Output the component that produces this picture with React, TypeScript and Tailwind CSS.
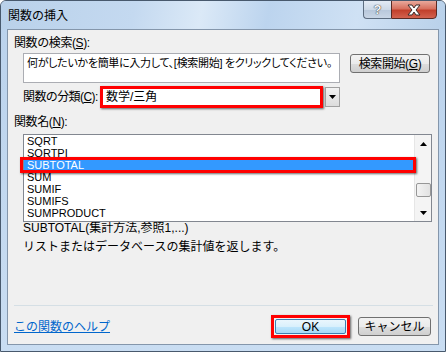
const items = ['SQRT', 'SQRTPI', 'SUBTOTAL', 'SUM', 'SUMIF', 'SUMIFS', 'SUMPRODUCT'];

function Triangle({ up = false }: { up?: boolean }) {
  return (
    <svg width="7" height="4" viewBox="0 0 7 4">
      <path d={up ? 'M0 4 L3.5 0 L7 4 Z' : 'M0 0 L7 0 L3.5 4 Z'} fill="#000" />
    </svg>
  );
}

export default function App() {
  return (
    <div className="w-[446px] h-[352px] bg-white font-['Liberation_Sans','Noto_Sans_CJK_JP',sans-serif] text-[12px] text-black">
      <div className="w-full h-full flex flex-col rounded-t-[6px] border border-[#48596d] bg-[linear-gradient(to_bottom,#bad2ec,#c9ddf2)] overflow-hidden">
        {/* title bar */}
        <div className="h-[28px] flex items-start bg-[linear-gradient(100deg,#b9d1ea_0%,#c4d9f0_30%,#dbe9f7_45%,#bcd4ee_60%,#cfe1f4_80%,#b9d1ea_100%)]">
          <span className="ml-[7px] mt-[8px] leading-[14px]">関数の挿入</span>
          <div className="ml-auto mr-[8px] flex -mt-px">
            <div className="w-[28px] h-[19px] rounded-bl-[4px] border border-[#5d6d80] border-r-0 bg-[linear-gradient(to_bottom,#e3ebf5,#cdd9e7_50%,#b7c7da_51%,#c9d6e6)] flex items-center justify-center">
              <span className="text-[13px] leading-[13px] font-bold text-[#f4f6f8] [text-shadow:0_0_1px_#333,0_0_1px_#333]">?</span>
            </div>
            <div className="w-[46px] h-[19px] rounded-br-[4px] border border-[#5a2a24] bg-[linear-gradient(to_bottom,#e9a99c,#d7715f_45%,#c2402c_55%,#d3624f)] flex items-center justify-center">
              <svg width="16" height="12" viewBox="0 0 16 12">
                <path d="M2 1 L6 1 L8 4 L10 1 L14 1 L10 6 L14 11 L10 11 L8 8 L6 11 L2 11 L6 6 Z" fill="#fff" stroke="#3a2a2a" strokeWidth="1" strokeLinejoin="round" />
              </svg>
            </div>
          </div>
        </div>

        {/* client area */}
        <div className="mx-[6px] mb-[6px] flex-1 border border-[#8496ab] bg-[#f0f0f0] flex flex-col">
          <div className="pt-[6px] pl-[6px] leading-[14px] tracking-[-0.4px]">
            関数の検索(<span className="underline">S</span>):
          </div>

          <div className="flex items-start pl-[15px] mt-[3px]">
            <div className="w-[317px] h-[30px] border border-[#abadb3] bg-white pl-[3px] pt-[2px] leading-[14px] whitespace-nowrap overflow-hidden text-[11px] [font-feature-settings:'palt'] tracking-[-0.3px]">
              何がしたいかを簡単に入力して、[検索開始] をクリックしてください。
            </div>
            <button className="ml-[10px] mt-px w-[80px] h-[19px] rounded-[3px] border border-[#707070] bg-[linear-gradient(to_bottom,#f2f2f2,#ebebeb_50%,#dddddd_51%,#cfcfcf)] leading-[14px] flex items-center justify-center tracking-[-0.4px]">
              検索開始(<span className="underline">G</span>)
            </button>
          </div>

          <div className="flex items-start pl-[15px] mt-[3px]">
            <div className="w-[77px] mt-[4px] leading-[14px] whitespace-nowrap tracking-[-0.6px]">
              関数の分類(<span className="underline">C</span>):
            </div>
            <div className="w-[223px] h-[22px] border-[3px] border-[#ff0000] bg-white shadow-[1px_1px_2px_rgba(0,0,0,0.6)] pl-[3px] leading-[16px]">
              数学/三角
            </div>
            <div className="ml-[2px] mt-px w-[15px] h-[20px] border border-[#a0a0a0] bg-[linear-gradient(to_bottom,#f2f2f2,#dcdcdc)] flex items-center justify-center">
              <Triangle />
            </div>
          </div>

          <div className="pl-[6px] mt-[7px] leading-[14px] tracking-[-0.4px]">
            関数名(<span className="underline">N</span>):
          </div>

          <div className="ml-[15px] mt-[5px] w-[409px] h-[88px] border border-[#828790] bg-white flex relative">
            <div className="flex-1 flex flex-col text-[11px]">
              {items.map((name) => (
                <div
                  key={name}
                  className={`h-[12px] leading-[12px] pl-[3px] ${name === 'SUBTOTAL' ? 'bg-[#3399ff] text-white' : ''}`}
                >
                  {name}
                </div>
              ))}
            </div>
            <div className="w-[17px] bg-[#f4f4f4] border-l border-[#e6e6e6] flex flex-col items-center">
              <div className="h-[17px] flex items-center justify-center">
                <Triangle up />
              </div>
              <div className="mt-[31px] w-[15px] h-[14px] rounded-[2px] border border-[#979797] bg-[linear-gradient(to_right,#f3f3f3,#e2e2e2)]" />
              <div className="mt-auto h-[17px] flex items-center justify-center">
                <Triangle />
              </div>
            </div>
            <div className="absolute left-[-4px] top-[22px] w-[396px] h-[16px] border-[3px] border-[#ff0000] shadow-[1px_1px_2px_rgba(0,0,0,0.6)]" />
          </div>

          <div className="pl-[15px] leading-[13px]">SUBTOTAL(集計方法,参照1,...)</div>
          <div className="pl-[15px] mt-[6px] leading-[13px]">リストまたはデータベースの集計値を返します。</div>

          <div className="mt-auto ml-[6px] mr-[5px] h-px bg-[#d5dfe5]" />

          <div className="mt-[9px] mb-[6px] flex items-center pl-[6px] pr-[7px]">
            <a className="text-[#0066cc] underline leading-[14px]" href="#">この関数のヘルプ</a>
            <div className="ml-auto w-[79px] h-[23px] border-[3px] border-[#ff0000] shadow-[1px_1px_2px_rgba(0,0,0,0.6)] p-px">
              <div className="w-full h-full rounded-[2px] border border-[#3c7fb1] bg-[linear-gradient(to_bottom,#eaf6fd,#d9f0fc_50%,#bee6fd_51%,#a7d9f5)] flex items-center justify-center leading-[14px]">
                OK
              </div>
            </div>
            <button className="ml-[8px] w-[73px] h-[19px] rounded-[3px] border border-[#707070] bg-[linear-gradient(to_bottom,#f2f2f2,#ebebeb_50%,#dddddd_51%,#cfcfcf)] leading-[14px] flex items-center justify-center">
              キャンセル
            </button>
          </div>
        </div>
      </div>
    </div>
  );
}
